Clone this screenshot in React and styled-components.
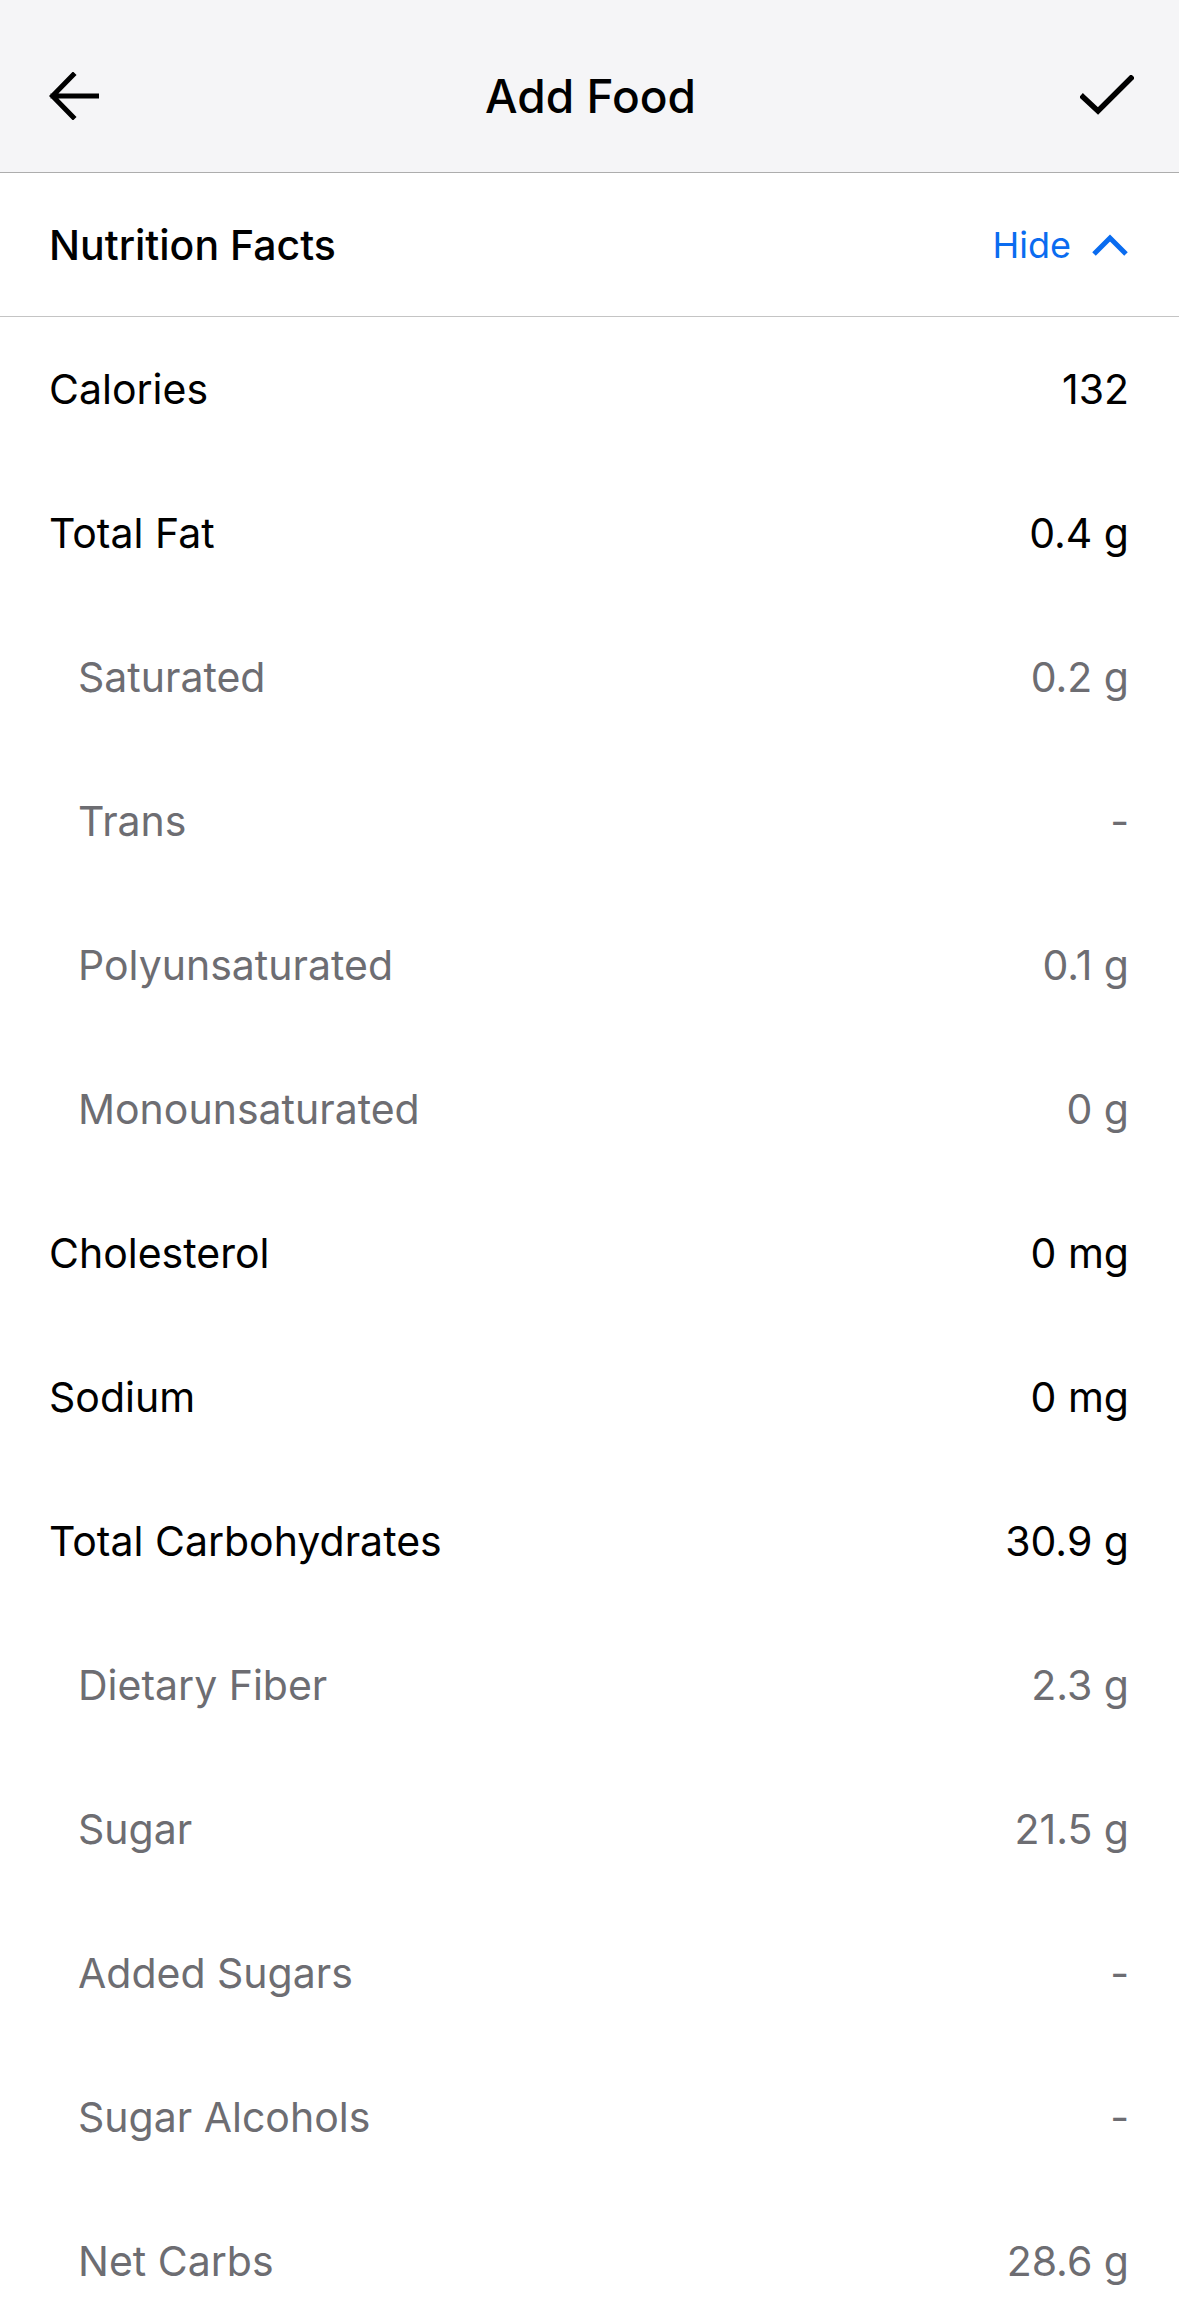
import React from 'react';
import styled, { createGlobalStyle } from 'styled-components';

const GlobalStyle = createGlobalStyle`
  html, body {
    margin: 0;
    padding: 0;
    background: #ffffff;
    font-family: Inter, "Noto Sans", "Liberation Sans", sans-serif;
    -webkit-font-smoothing: antialiased;
  }
  body { overflow: hidden; }
`;

const nutrients = [
  { label: 'Calories', value: '132' },
  { label: 'Total Fat', value: '0.4 g' },
  { label: 'Saturated', value: '0.2 g', sub: true },
  { label: 'Trans', value: '-', sub: true },
  { label: 'Polyunsaturated', value: '0.1 g', sub: true },
  { label: 'Monounsaturated', value: '0 g', sub: true },
  { label: 'Cholesterol', value: '0 mg' },
  { label: 'Sodium', value: '0 mg' },
  { label: 'Total Carbohydrates', value: '30.9 g' },
  { label: 'Dietary Fiber', value: '2.3 g', sub: true },
  { label: 'Sugar', value: '21.5 g', sub: true },
  { label: 'Added Sugars', value: '-', sub: true },
  { label: 'Sugar Alcohols', value: '-', sub: true },
  { label: 'Net Carbs', value: '28.6 g', sub: true },
];

function BackIcon() {
  return (
    <svg width="50" height="48" viewBox="0 0 50 48" fill="none">
      <path d="M48 24H4M24 3L3.5 24L24 45" stroke="#000" strokeWidth="5" strokeLinecap="square" strokeLinejoin="miter" />
    </svg>
  );
}

function CheckIcon() {
  return (
    <svg width="54" height="42" viewBox="0 0 54 42" fill="none">
      <path d="M3 22L18 36L51 3" stroke="#000" strokeWidth="5.5" strokeLinecap="square" />
    </svg>
  );
}

function ChevronUp() {
  return (
    <svg width="38" height="24" viewBox="0 0 38 24" fill="none">
      <path d="M3 21L19 5L35 21" stroke="#0a6cf0" strokeWidth="5" />
    </svg>
  );
}

function App() {
  return (
    <>
      <GlobalStyle />
      <Screen>
        <NavBar>
          <IconButton><BackIcon /></IconButton>
          <Title>Add Food</Title>
          <IconButton><CheckIcon /></IconButton>
        </NavBar>
        <SectionHeader>
          <SectionTitle>Nutrition Facts</SectionTitle>
          <Toggle>
            Hide
            <ChevronUp />
          </Toggle>
        </SectionHeader>
        <List>
          {nutrients.map((n) => (
            <Row key={n.label} $sub={n.sub}>
              <span>{n.label}</span>
              <span>{n.value}</span>
            </Row>
          ))}
        </List>
      </Screen>
    </>
  );
}

const Screen = styled.div`
  width: 100%;
  min-height: 2315px;
  background: #fff;
`;

const NavBar = styled.header`
  height: 173px;
  box-sizing: border-box;
  background: #f5f5f7;
  border-bottom: 1px solid #adadad;
  display: flex;
  align-items: center;
  justify-content: space-between;
  padding: 20px 44px 0 46px;
`;

const IconButton = styled.div`
  width: 56px;
  height: 56px;
  display: flex;
  align-items: center;
  justify-content: center;
`;

const Title = styled.h1`
  margin: 0;
  font-size: 46px;
  font-weight: 500;
  color: #000;
  letter-spacing: 0;
`;

const SectionHeader = styled.div`
  height: 144px;
  box-sizing: border-box;
  border-bottom: 1px solid #c4c4c4;
  display: flex;
  align-items: center;
  justify-content: space-between;
  padding: 0 50px 0 49px;
`;

const SectionTitle = styled.div`
  font-size: 41px;
  font-weight: 500;
  color: #000;
`;

const Toggle = styled.div`
  display: flex;
  align-items: center;
  gap: 20px;
  font-size: 36px;
  color: #0a6cf0;
`;

const List = styled.div`
  display: flex;
  flex-direction: column;
`;

const Row = styled.div`
  height: 144px;
  display: flex;
  align-items: center;
  justify-content: space-between;
  padding: 0 50px 0 ${(p) => (p.$sub ? '78px' : '49px')};
  font-size: 41px;
  color: ${(p) => (p.$sub ? '#6d6d72' : '#000')};
`;

export default App;
